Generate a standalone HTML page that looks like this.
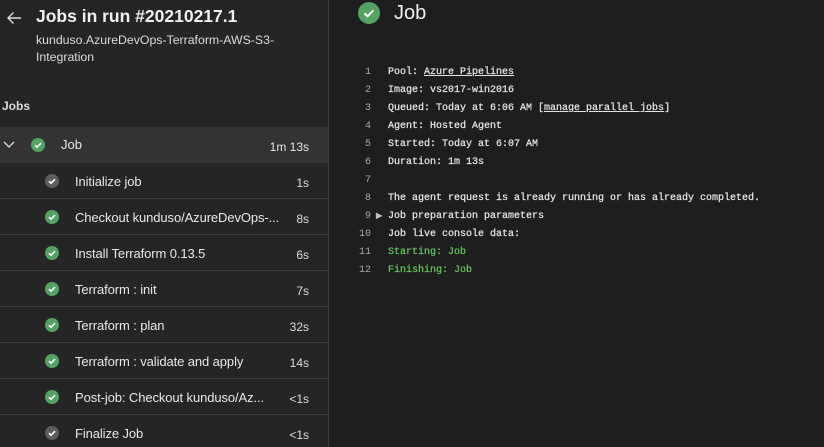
<!DOCTYPE html>
<html><head><meta charset="utf-8"><style>
*{margin:0;padding:0;box-sizing:border-box}
html,body{width:824px;height:447px;overflow:hidden}
body{background:#1e1e1e;font-family:"Liberation Sans",sans-serif;color:#e6e6e6;position:relative}
#left{position:absolute;left:0;top:0;width:329px;height:447px;background:#252525;border-right:1px solid #3a3a3a}
.abs{position:absolute}
.row{position:absolute;left:0;width:328px;height:36px;border-bottom:1px solid #3c3c3c}
.row .ic{position:absolute;left:45px;top:11px}
.row .nm{position:absolute;left:75px;top:11px;font-size:13px;color:#e8e8e8;letter-spacing:-0.1px}
.row .t{position:absolute;right:19px;top:13px;font-size:12px;color:#ddd}
#log{position:absolute;left:355px;top:64px;font-family:"Liberation Mono",monospace;font-size:10px;line-height:18px;color:#e4e4e4;white-space:pre;-webkit-text-stroke:0.25px #e4e4e4}
.n{display:inline-block;width:16px;text-align:right;color:#a8a8a8;margin-right:17px;-webkit-text-stroke:0}
.g{color:#62c45d;-webkit-text-stroke:0.25px #62c45d}
u{text-decoration:underline}
</style></head><body>
<div id="left">
<svg class="abs" style="left:6px;top:10px" width="16" height="16" viewBox="0 0 16 16"><path d="M15 8H2M7.5 2.5L2 8l5.5 5.5" stroke="#ddd" stroke-width="1.4" fill="none"/></svg>
<div class="abs" style="left:36px;top:6px;font-size:17.5px;font-weight:bold;color:#f0f0f0">Jobs in run #20210217.1</div>
<div class="abs" style="left:36px;top:32px;font-size:12.3px;line-height:17px;color:#dcdcdc;width:260px">kunduso.AzureDevOps-Terraform-AWS-S3-<br>Integration</div>
<div class="abs" style="left:2px;top:99px;font-size:12px;font-weight:bold;color:#dcdcdc">Jobs</div>
<div class="row" style="top:127px;background:#333;border:none">
<svg class="abs" style="left:3px;top:14px" width="12" height="8" viewBox="0 0 12 8"><path d="M1 1l5 5 5-5" stroke="#ddd" stroke-width="1.3" fill="none"/></svg>
<svg class="abs" style="left:31px;top:11px" width="14" height="14"><circle cx="7" cy="7" r="7" fill="#55a362"/><path d="M4 7.2l2 2 4-4" stroke="#fff" stroke-width="1.6" fill="none"/></svg>
<div class="abs" style="left:61px;top:10px;font-size:13px">Job</div>
<div class="abs" style="right:19px;top:13px;font-size:12px">1m 13s</div>
</div>
<div class="row" style="top:163px"><svg class="ic" width="14" height="14"><circle cx="7" cy="7" r="7" fill="#5e5e5e"/><path d="M4 7.2l2 2 4-4" stroke="#fff" stroke-width="1.6" fill="none"/></svg><div class="nm">Initialize job</div><div class="t">1s</div></div>
<div class="row" style="top:199px"><svg class="ic" width="14" height="14"><circle cx="7" cy="7" r="7" fill="#55a362"/><path d="M4 7.2l2 2 4-4" stroke="#fff" stroke-width="1.6" fill="none"/></svg><div class="nm">Checkout kunduso/AzureDevOps-...</div><div class="t">8s</div></div>
<div class="row" style="top:235px"><svg class="ic" width="14" height="14"><circle cx="7" cy="7" r="7" fill="#55a362"/><path d="M4 7.2l2 2 4-4" stroke="#fff" stroke-width="1.6" fill="none"/></svg><div class="nm">Install Terraform 0.13.5</div><div class="t">6s</div></div>
<div class="row" style="top:271px"><svg class="ic" width="14" height="14"><circle cx="7" cy="7" r="7" fill="#55a362"/><path d="M4 7.2l2 2 4-4" stroke="#fff" stroke-width="1.6" fill="none"/></svg><div class="nm">Terraform : init</div><div class="t">7s</div></div>
<div class="row" style="top:307px"><svg class="ic" width="14" height="14"><circle cx="7" cy="7" r="7" fill="#55a362"/><path d="M4 7.2l2 2 4-4" stroke="#fff" stroke-width="1.6" fill="none"/></svg><div class="nm">Terraform : plan</div><div class="t">32s</div></div>
<div class="row" style="top:343px"><svg class="ic" width="14" height="14"><circle cx="7" cy="7" r="7" fill="#55a362"/><path d="M4 7.2l2 2 4-4" stroke="#fff" stroke-width="1.6" fill="none"/></svg><div class="nm">Terraform : validate and apply</div><div class="t">14s</div></div>
<div class="row" style="top:379px"><svg class="ic" width="14" height="14"><circle cx="7" cy="7" r="7" fill="#55a362"/><path d="M4 7.2l2 2 4-4" stroke="#fff" stroke-width="1.6" fill="none"/></svg><div class="nm">Post-job: Checkout kunduso/Az...</div><div class="t">&lt;1s</div></div>
<div class="row" style="top:415px;border:none"><svg class="ic" width="14" height="14"><circle cx="7" cy="7" r="7" fill="#5e5e5e"/><path d="M4 7.2l2 2 4-4" stroke="#fff" stroke-width="1.6" fill="none"/></svg><div class="nm">Finalize Job</div><div class="t">&lt;1s</div></div>
</div>
<svg class="abs" style="left:358px;top:2px" width="22" height="22"><circle cx="11" cy="11" r="11" fill="#55a362"/><path d="M6.5 11.3l3 3 6-6" stroke="#fff" stroke-width="2" fill="none"/></svg>
<div class="abs" style="left:394px;top:2px;font-size:20px;color:#f0f0f0">Job</div>
<div id="log"><span class="n">1</span>Pool: <u>Azure Pipelines</u>
<span class="n">2</span>Image: vs2017-win2016
<span class="n">3</span>Queued: Today at 6:06 AM [<u>manage parallel jobs</u>]
<span class="n">4</span>Agent: Hosted Agent
<span class="n">5</span>Started: Today at 6:07 AM
<span class="n">6</span>Duration: 1m 13s
<span class="n">7</span>
<span class="n">8</span>The agent request is already running or has already completed.
<span class="n" style="margin-right:5px">9</span><span style="font-size:8px;display:inline-block;width:12px;color:#bbb">▶</span>Job preparation parameters
<span class="n">10</span>Job live console data:
<span class="n">11</span><span class="g">Starting: Job</span>
<span class="n">12</span><span class="g">Finishing: Job</span></div>
</body></html>
